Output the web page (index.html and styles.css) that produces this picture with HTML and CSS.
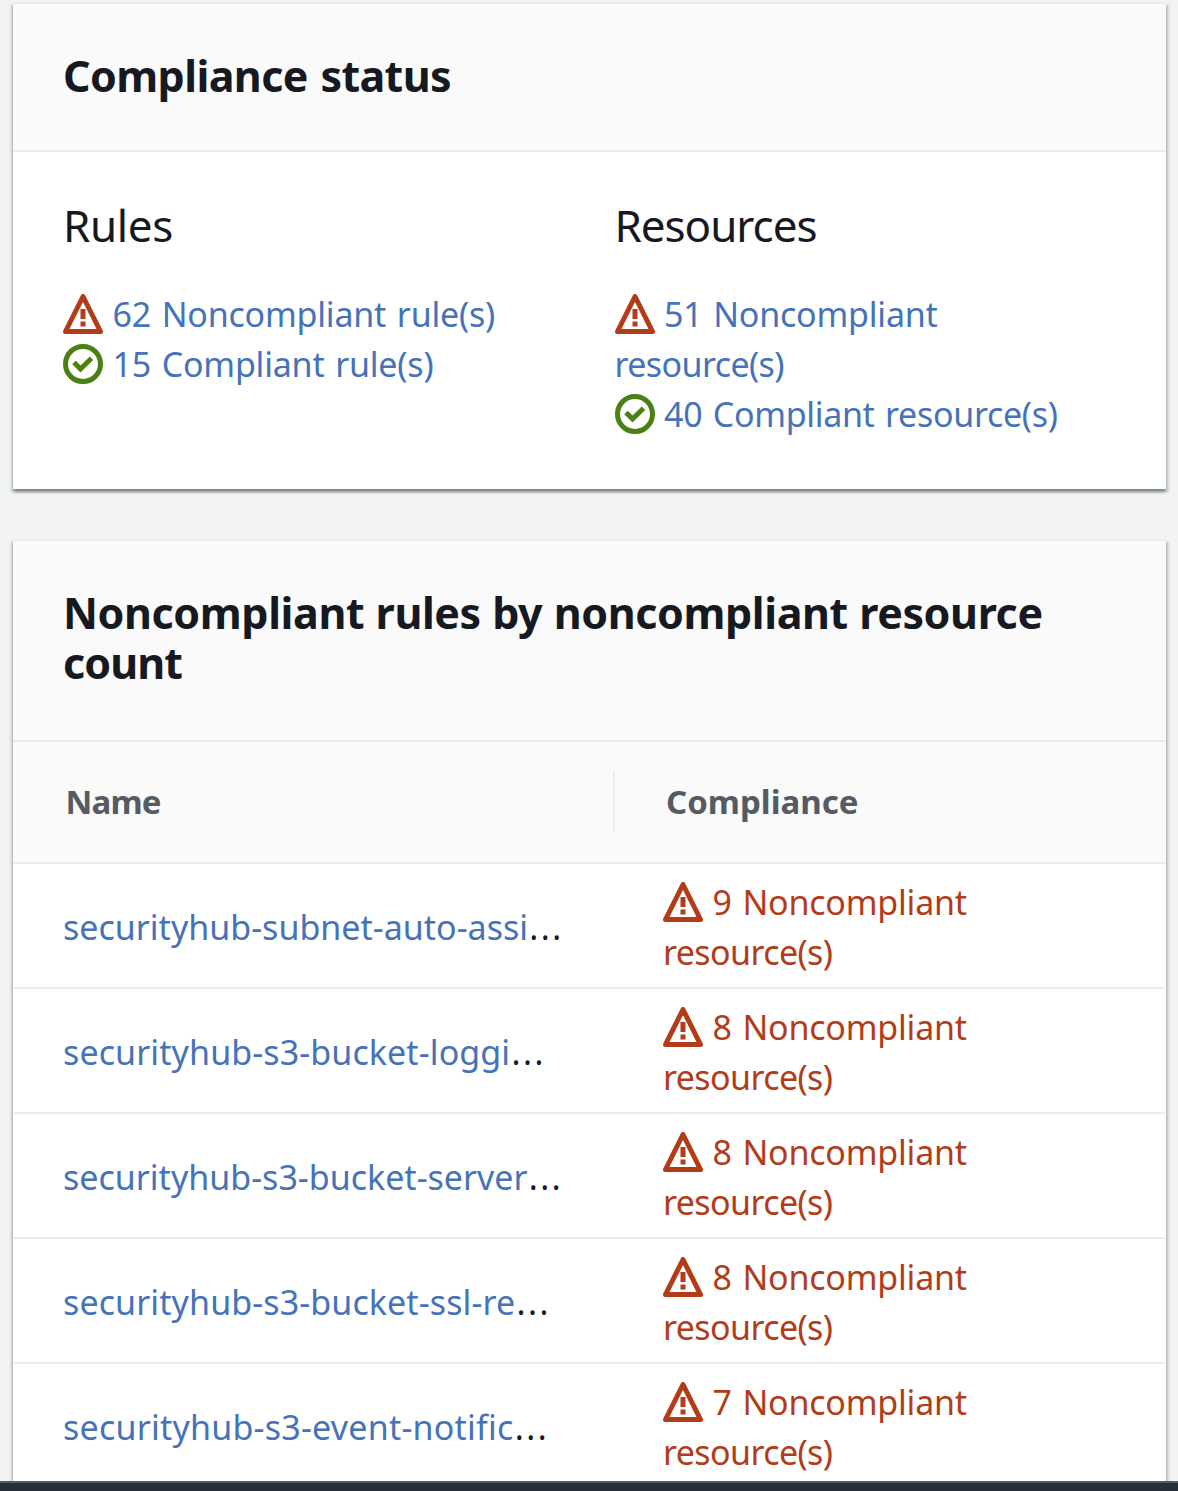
FILE: index.html
```
<!DOCTYPE html>
<html lang="en">
<head>
<meta charset="utf-8">
<title>Compliance status</title>
<link rel="stylesheet" href="styles.css">
</head>
<body>
<svg class="defs" aria-hidden="true">
  <symbol id="warning" viewBox="0 0 16 16"><path d="M8 1 15 15H1z" fill="none" stroke="currentColor" stroke-width="2" stroke-linejoin="round"/><path d="M7 6h2v4H7zM7 11h2v2H7z" fill="currentColor"/></symbol>
  <symbol id="success" viewBox="0 0 16 16"><circle cx="8" cy="8" r="7" fill="none" stroke="currentColor" stroke-width="2"/><path d="M4.4 7.4 7 10l4.4-4.3" fill="none" stroke="currentColor" stroke-width="2"/></symbol>
</svg>
<div class="page">
  <main class="content">
    <section class="card">
      <header class="card-header"><h2>Compliance status</h2></header>
      <div class="summary">
        <div class="column">
          <h3>Rules</h3>
          <ul>
            <li><svg class="icon error"><use href="#warning"/></svg><a class="snug">62 Noncompliant rule(s)</a></li>
            <li><svg class="icon ok"><use href="#success"/></svg><a class="snug">15 Compliant rule(s)</a></li>
          </ul>
        </div>
        <div class="column">
          <h3 class="narrow">Resources</h3>
          <ul>
            <li><svg class="icon error"><use href="#warning"/></svg><a class="snug">51 Noncompliant<br><span class="tight">resource(s)</span></a></li>
            <li><svg class="icon ok"><use href="#success"/></svg><a class="snug long">40 Compliant resource(s)</a></li>
          </ul>
        </div>
      </div>
    </section>
    <section class="card rules">
      <header class="card-header"><h2>Noncompliant rules by noncompliant resource<br><span class="last">count</span></h2></header>
      <div class="row head">
        <div class="cell name">Name</div>
        <div class="cell">Compliance</div>
      </div>
      <div class="row">
        <div class="cell"><a>securityhub-subnet-auto-assi</a><span class="dots">…</span></div>
        <div class="cell error"><svg class="icon"><use href="#warning"/></svg><span class="snug">9 Noncompliant</span><br><span class="tight">resource(s)</span></div>
      </div>
      <div class="row">
        <div class="cell"><a class="wide">securityhub-s3-bucket-loggi</a><span class="dots">…</span></div>
        <div class="cell error"><svg class="icon"><use href="#warning"/></svg><span class="snug">8 Noncompliant</span><br><span class="tight">resource(s)</span></div>
      </div>
      <div class="row">
        <div class="cell"><a>securityhub-s3-bucket-server</a><span class="dots">…</span></div>
        <div class="cell error"><svg class="icon"><use href="#warning"/></svg><span class="snug">8 Noncompliant</span><br><span class="tight">resource(s)</span></div>
      </div>
      <div class="row">
        <div class="cell"><a class="wide">securityhub-s3-bucket-ssl-re</a><span class="dots">…</span></div>
        <div class="cell error"><svg class="icon"><use href="#warning"/></svg><span class="snug">8 Noncompliant</span><br><span class="tight">resource(s)</span></div>
      </div>
      <div class="row">
        <div class="cell"><a class="wider">securityhub-s3-event-notific</a><span class="dots">…</span></div>
        <div class="cell error"><svg class="icon"><use href="#warning"/></svg><span class="snug">7 Noncompliant</span><br><span class="tight">resource(s)</span></div>
      </div>
    </section>
  </main>
  <footer class="footer"></footer>
</div>
</body>
</html>
```
FILE: styles.css
```
* { box-sizing: border-box; }
body {
  margin: 0;
  background: #f2f3f3;
  color: #16191f;
  font: 34px/50px "Noto Sans", sans-serif;
}
.defs { display: none; }
.page {
  display: flex;
  flex-direction: column;
  height: 1491px;
  overflow: hidden;
}
.content {
  flex: 1;
  min-height: 0;
  overflow: hidden;
  padding: 2px 12px 0 13px;
  display: flex;
  flex-direction: column;
  gap: 50px;
}
.card {
  flex: none;
  background: #fff;
  border-top: 2px solid #eaeded;
  box-shadow: 0 2.5px 2.5px 0 rgba(0, 28, 36, .3), 2.5px 2.5px 2.5px 0 rgba(0, 28, 36, .15), -2.5px 2.5px 2.5px 0 rgba(0, 28, 36, .15);
}
.card-header {
  background: #fafafa;
  border-bottom: 2px solid #ebebeb;
  padding: 47px 50px 49px;
}
.rules .card-header { padding: 47px 50px 52px; }
h2, h3 { margin: 0; }
h2 { font-size: 43px; line-height: 50px; letter-spacing: -.6px; word-spacing: 2px; }
.rules h2 { letter-spacing: -.4px; word-spacing: .6px; }
.rules h2 .last { letter-spacing: -.9px; }
h3 { font-size: 44px; font-weight: 400; line-height: 50px; letter-spacing: -.4px; }
h3.narrow { letter-spacing: -1.05px; }
.summary {
  display: grid;
  grid-template-columns: 551.5px 1fr;
  padding: 48px 0 50px 50px;
}
.column { display: flex; flex-direction: column; gap: 39px; }
ul { margin: 0; padding: 0; list-style: none; }
a { color: #4572b8; }
.icon {
  width: 40px;
  height: 40px;
  margin-right: 9.5px;
  vertical-align: -7px;
}
.error { color: #b23c17; }
.ok { color: #4b8014; }
.tight { letter-spacing: -.6px; }
.snug { letter-spacing: -.2px; word-spacing: 2px; }
.snug.long { letter-spacing: -.32px; }
.wide { letter-spacing: .1px; }
.wider { letter-spacing: .22px; }
.row {
  display: grid;
  grid-template-columns: 600px 1fr;
  align-items: center;
  height: 125px;
  margin: 0 1px;
  padding: 0 1px;
  border-bottom: 2px solid #ebebeb;
}
.cell { padding: 2px 0 0 48px; white-space: nowrap; }
.row.head {
  height: 122px;
  margin: 0;
  padding: 0 2px;
  background: #fafafa;
  color: #545b64;
  font-size: 33px;
  font-weight: 700;
}
.head .cell { height: 60px; padding: 5px 0 5px 51px; }
.head .name { letter-spacing: -.8px; padding-left: 50.5px; }
.head .cell + .cell { border-left: 2px solid #ebebeb; margin-left: -2px; }
.row:last-child { border-bottom-color: transparent; }
.dots { font-size: 47px; font-weight: 300; line-height: 20px; }
.footer { flex: none; height: 10px; background: #272f3d; border-top: 2px solid #545b64; }
```
